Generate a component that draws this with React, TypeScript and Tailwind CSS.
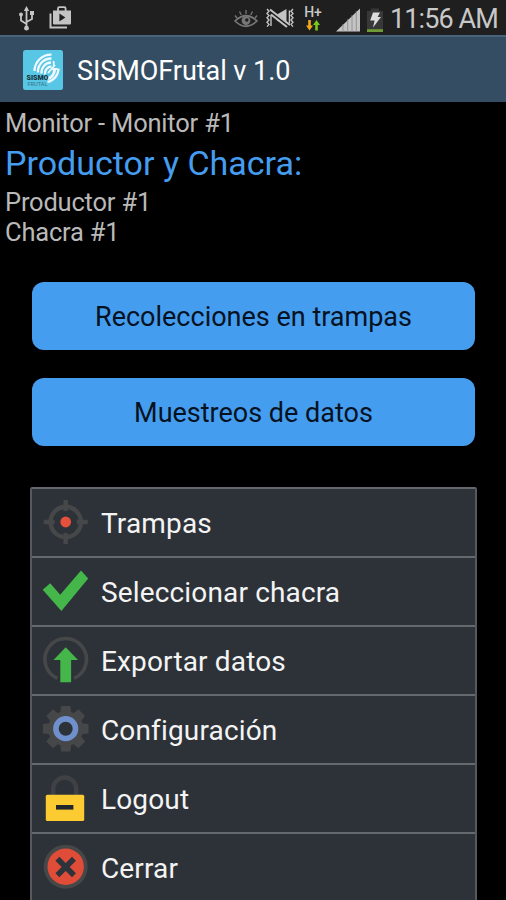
import type { ReactNode } from "react";

type MenuItem = {
  label: string;
  icon: ReactNode;
};

const TEETH = [0, 45, 90, 135, 180, 225, 270, 315];

const menuItems: MenuItem[] = [
  {
    label: "Trampas",
    icon: (
      <>
        <circle cx="22.7" cy="23" r="15.2" fill="none" stroke="#464748" strokeWidth="4.4" />
        <path d="M22.7 1v11M22.7 34v11M.7 23h11M33.7 23h11" stroke="#464748" strokeWidth="4.4" />
        <circle cx="22.7" cy="23" r="5.4" fill="#e4503c" />
      </>
    ),
  },
  {
    label: "Seleccionar chacra",
    icon: <path d="M-.3 21.8 7.2 15.3l10 11.4L38 2.6l7.2 8L18.4 43z" fill="#45b649" />,
  },
  {
    label: "Exportar datos",
    icon: (
      <>
        <path d="M14.3 41.3a20.8 20.8 0 1 1 16.8 0" fill="none" stroke="#464748" strokeWidth="3.6" />
        <path d="M22.7 10.3 35 23h-6.9v22.3H17.3V23h-6.8z" fill="#45b649" />
      </>
    ),
  },
  {
    label: "Configuración",
    icon: (
      <>
        {TEETH.map((deg) => (
          <path key={deg} d="M17.2 7 18-.1h9.4l.8 7.1z" fill="#464748" transform={`rotate(${deg} 22.7 22.7)`} />
        ))}
        <circle cx="22.7" cy="22.7" r="14.5" fill="none" stroke="#464748" strokeWidth="6" />
        <circle cx="22.7" cy="22.7" r="9.8" fill="none" stroke="#6f90cc" strokeWidth="5.6" />
      </>
    ),
  },
  {
    label: "Logout",
    icon: (
      <>
        <path d="M10.2 20v-6a11.5 11.5 0 0 1 23 0v6" fill="none" stroke="#3f4144" strokeWidth="4.4" />
        <rect x="2.8" y="19.7" width="38.4" height="26.3" rx="1.6" fill="#fccb32" />
        <rect x="13" y="30" width="17.4" height="4.6" fill="#20262c" />
      </>
    ),
  },
  {
    label: "Cerrar",
    icon: (
      <>
        <circle cx="22.7" cy="22.7" r="22" fill="#464748" />
        <circle cx="22.7" cy="22.7" r="18.2" fill="#df4c38" />
        <path d="m14.4 14.8 16.6 16.4M31 14.8 14.4 31.2" stroke="#2d333a" strokeWidth="5.6" />
      </>
    ),
  },
];

function StatusBar() {
  return (
    <div className="flex h-[35px] shrink-0 items-center bg-[#1f1f1f] text-[#c8c8c8]">
      <svg className="ml-[18px] mt-px shrink-0" width="17" height="26" viewBox="0 0 17 26" fill="none" stroke="#c4c4c4" strokeWidth="1.8">
        <path d="M8.5 3v20M8.5 19 3 15.5V10M8.5 17l5.5-3V8" />
        <path d="M8.5 1 5.8 6h5.4z" fill="#c4c4c4" stroke="none" />
        <circle cx="8.5" cy="23.2" r="2.4" fill="#c4c4c4" stroke="none" />
        <circle cx="3" cy="9.5" r="2" fill="#c4c4c4" stroke="none" />
        <path d="M12 6h4v4h-4z" fill="#c4c4c4" stroke="none" />
      </svg>
      <svg className="ml-[14px] shrink-0" width="23" height="24" viewBox="0 0 23 24">
        <path d="M1.5 7.5v14H18" fill="none" stroke="#c4c4c4" strokeWidth="2" />
        <path d="M9 5V2.5Q9 1.2 10.3 1.2h5Q16.6 1.2 16.6 2.5V5" fill="none" stroke="#c4c4c4" strokeWidth="1.8" />
        <path d="M4 4.5h18v13q0 1-1 1H5q-1 0-1-1z" fill="#c4c4c4" />
        <path d="m10.4 7.5 6 4-6 4z" fill="#1f1f1f" />
      </svg>
      <svg className="ml-auto mt-[3px] shrink-0" width="24" height="20" viewBox="0 0 24 20" fill="none" stroke="#777" strokeWidth="1.7">
        <path d="M1 12Q12 1.5 23 12 12 22.5 1 12z" />
        <circle cx="12" cy="11.6" r="4.4" fill="#777" stroke="none" />
        <circle cx="12.8" cy="11" r="1.7" fill="#1f1f1f" stroke="none" />
        <path d="M12 1v4M5.5 2.5 7.3 6M18.5 2.5 16.7 6M1 6.5l2 2.5M23 6.5 21 9" strokeWidth="1.3" />
      </svg>
      <svg className="ml-[7px] mt-[2px] shrink-0" width="30" height="21" viewBox="0 0 30 21">
        <path d="m2 1 2 2.2L2 5.4l2 2.2-2 2.2L4 12l-2 2.2 2 2.2-2 2.2M6 5v13M28 1l-2 2.2 2 2.2-2 2.2 2 2.2-2 2.2 2 2.2-2 2.2 2 2.2M24.4 2.5v13" fill="none" stroke="#c4c4c4" strokeWidth="1.4" />
        <path d="M12 6.5 21.5 1v16.5L12 12.5z" fill="#c4c4c4" />
        <path d="M5 4 25 18.5" stroke="#1f1f1f" strokeWidth="4" />
        <path d="M5 1.5 25 17M6 6.5 22 19" stroke="#c4c4c4" strokeWidth="2" />
      </svg>
      <div className="ml-[8px] mt-px flex w-[20px] flex-col items-center">
        <span className="text-[14px] font-medium leading-[12px]">H+</span>
        <svg className="mt-[2px]" width="14" height="11" viewBox="0 0 14 11">
          <path d="M2.2 0h2.6v5.5H7L3.5 10.5 0 5.5h2.2z" fill="#f0a81c" />
          <path d="M9.2 10.5h2.6V5H14L10.5 0 7 5h2.2z" fill="#79c71c" />
        </svg>
      </div>
      <svg className="ml-[13px] mt-[4px] shrink-0" width="25" height="24" viewBox="0 0 25 24">
        <path d="M0 23.5 24 .5v23z" fill="#c4c4c4" />
        <path d="M7 16v8M11.7 11v13M16 7v17M20.3 3v21" stroke="#888" strokeWidth=".8" />
      </svg>
      <svg className="ml-[5px] mt-[4px] shrink-0" width="18" height="24" viewBox="0 0 18 24">
        <path d="M5 .5h8V3h4v20.5H1V3h4z" fill="#383838" />
        <path d="M1 21.2h16V24H1z" fill="#6f9c34" />
        <path d="M7 4.5h7L11.6 9H15L7 19.5l1.6-7H4.2z" fill="#ddd" />
      </svg>
      <span className="ml-[6px] mr-[9px] mt-[3px] w-[107px] whitespace-nowrap text-[27px] leading-none tracking-[-0.9px]">11:56 AM</span>
    </div>
  );
}

function AppLogo() {
  return (
    <svg className="shrink-0" width="40" height="40" viewBox="0 0 40 40">
      <rect width="40" height="40" rx="2.5" fill="#58c6e5" />
      <g fill="none" stroke="#eefaff" strokeWidth="2.3">
        <path d="M11.5 21A16.5 16.5 0 0 1 28.5 4.6" />
        <path d="M15 22.5A13 13 0 0 1 28.5 8.5" />
        <path d="M18.5 23.5A10 10 0 0 1 28 12.5" />
        <path d="M22 24.5A7 7 0 0 1 28.5 16.5" />
        <path d="M25 23l7-8M29 19h5.5M31 16l-.5-5" strokeWidth="1.8" />
        <path d="M35.5 18.5A14 14 0 0 1 24.5 32" />
        <path d="M31.5 20A9 9 0 0 1 24.5 28.5" strokeWidth="3" />
      </g>
      <text x="3.5" y="30" textLength="22" lengthAdjust="spacingAndGlyphs" fontFamily="Roboto" fontSize="7.5" fontWeight="900" fill="#17323d">SISMO</text>
      <text x="4.5" y="35.5" textLength="20" lengthAdjust="spacingAndGlyphs" fontFamily="Roboto" fontSize="5.5" fill="#347286">FRUTAL</text>
    </svg>
  );
}

export default function App() {
  return (
    <main className="flex h-[900px] w-[506px] flex-col overflow-hidden bg-black font-['Roboto',sans-serif]">
      <StatusBar />
      <header className="flex h-[67px] shrink-0 items-center border-t-2 border-[#48627a] bg-[#344d62] pl-[23px]">
        <AppLogo />
        <h1 className="ml-[14px] mt-[3px] whitespace-nowrap text-[27px] leading-none tracking-[-0.05px] text-white">SISMOFrutal v 1.0</h1>
      </header>

      <section className="flex h-[180px] shrink-0 flex-col whitespace-nowrap pl-[5px] pt-[6px] text-[25.5px] leading-[30px] tracking-[-0.2px] text-[#b9b9b9]">
        <p>Monitor - Monitor #1</p>
        <h2 className="mb-[4px] mt-[5px] text-[34px] leading-[40px] tracking-normal text-[#459def]">Productor y Chacra:</h2>
        <p>Productor #1</p>
        <p>Chacra #1</p>
      </section>

      <div className="flex shrink-0 flex-col gap-[28px] px-8 text-[27px] text-[#06121f]">
        <button className="h-[68px] w-[443px] rounded-[12px] bg-[#459def] pt-[2px]">Recolecciones en trampas</button>
        <button className="h-[68px] w-[443px] rounded-[12px] bg-[#459def] pt-[2px]">Muestreos de datos</button>
      </div>

      <nav className="ml-[30px] mt-[41px] w-[447px] shrink-0 rounded-t-[2px] border-x-2 border-[#56595e] bg-[#2d3238]">
        {menuItems.map(({ label, icon }) => (
          <div key={label} className="flex h-[69px] items-center border-t-2 border-[#65696e] pl-[11px]">
            <svg className="-mt-px shrink-0 overflow-visible" width="46" height="46" viewBox="0 0 46 46">
              {icon}
            </svg>
            <span className="ml-[12px] mt-[3px] whitespace-nowrap text-[28px] leading-none tracking-[0.15px] text-[#f4f4f4]">{label}</span>
          </div>
        ))}
      </nav>
    </main>
  );
}
